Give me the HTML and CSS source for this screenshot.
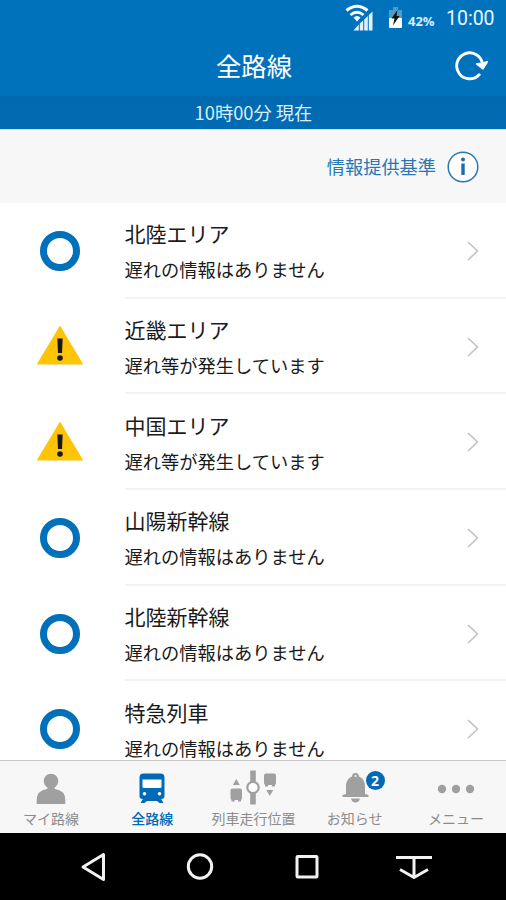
FILE: index.html
```html
<!DOCTYPE html>
<html lang="ja">
<head>
<meta charset="utf-8">
<title>全路線</title>
<link rel="stylesheet" href="styles.css">
</head>
<body>
<div class="screen">
  <header class="header">
    <div class="status">
      <svg class="signal" width="30" height="28" viewBox="0 0 30 28">
        <path d="M1.500 6.500Q12 -2 22.500 6.500" fill="none" stroke="#fff" stroke-width="3"/>
        <path d="M5.500 11Q12 5.500 18.500 11" fill="none" stroke="#fff" stroke-width="2.800"/>
        <path d="M8.500 13.500Q12 10.500 15.500 13.500L12 17.500z" fill="#fff"/>
        <path d="M27.500 7.500V26.500H23.800V11zM22.800 12V26.500H19.200V15.500zM18.200 16.500V26.500H14.800V19.500zM13.800 20.500V26.500H8.500z" fill="#e4f1fc"/>
      </svg>
      <svg class="battery" width="15" height="22" viewBox="0 0 15 22">
        <path d="M5 0H10V3H14V11H1V3H5z" fill="#4b9bcc"/>
        <path d="M1 11H14V20Q14 21 13 21H2Q1 21 1 20z" fill="#fff"/>
        <path d="M9.500 3L3.500 11.500H6.500L5 18.500L11.500 9H8.500z" fill="#111"/>
      </svg>
      <span class="percent">42%</span>
      <span class="clock">10:00</span>
    </div>
    <div class="titlebar">
      <h1>全路線</h1>
      <svg class="refresh" width="36" height="34" viewBox="0 0 36 34">
        <path d="M25.200 25.700A13 13 0 1 1 28.500 14.500" fill="none" stroke="#fff" stroke-width="2.900" stroke-linecap="round"/>
        <path d="M23 15L28.800 19.500L33 13L28.500 14.500z" fill="#fff" stroke="#fff" stroke-width="2.200" stroke-linecap="round" stroke-linejoin="round"/>
      </svg>
    </div>
    <div class="asof">10時00分 現在</div>
  </header>

  <div class="criteria">
    <span>情報提供基準</span>
    <svg width="32" height="32" viewBox="0 0 32 32">
      <circle cx="16" cy="16" r="14.800" fill="#fff" stroke="#2878b4" stroke-width="1.500"/>
      <circle cx="16" cy="8.500" r="2" fill="#1c6baa"/>
      <path d="M16 12.500V24" stroke="#1c6baa" stroke-width="3.400"/>
    </svg>
  </div>

  <main class="list">
    <div class="row">
      <div class="mark"><i class="ring"></i></div>
      <div class="body"><div class="text"><h2>北陸エリア</h2><p>遅れの情報はありません</p></div>
      <svg class="chevron" viewBox="0 0 12 20"><path d="M1 1L10.500 10L1 19"/></svg></div>
    </div>
    <div class="row">
      <div class="mark"><svg class="warn" width="48" height="40" viewBox="0 0 48 40"><path d="M24 .5L47.300 39.500H.7z" fill="#fdc408"/><path d="M21.300 13.500H26.700L26 28H22z" fill="#15191e"/><circle cx="24" cy="33" r="2.800" fill="#15191e"/></svg></div>
      <div class="body"><div class="text"><h2>近畿エリア</h2><p>遅れ等が発生しています</p></div>
      <svg class="chevron" viewBox="0 0 12 20"><path d="M1 1L10.500 10L1 19"/></svg></div>
    </div>
    <div class="row">
      <div class="mark"><svg class="warn" width="48" height="40" viewBox="0 0 48 40"><path d="M24 .5L47.300 39.500H.7z" fill="#fdc408"/><path d="M21.300 13.500H26.700L26 28H22z" fill="#15191e"/><circle cx="24" cy="33" r="2.800" fill="#15191e"/></svg></div>
      <div class="body"><div class="text"><h2>中国エリア</h2><p>遅れ等が発生しています</p></div>
      <svg class="chevron" viewBox="0 0 12 20"><path d="M1 1L10.500 10L1 19"/></svg></div>
    </div>
    <div class="row">
      <div class="mark"><i class="ring"></i></div>
      <div class="body"><div class="text"><h2>山陽新幹線</h2><p>遅れの情報はありません</p></div>
      <svg class="chevron" viewBox="0 0 12 20"><path d="M1 1L10.500 10L1 19"/></svg></div>
    </div>
    <div class="row">
      <div class="mark"><i class="ring"></i></div>
      <div class="body"><div class="text"><h2>北陸新幹線</h2><p>遅れの情報はありません</p></div>
      <svg class="chevron" viewBox="0 0 12 20"><path d="M1 1L10.500 10L1 19"/></svg></div>
    </div>
    <div class="row">
      <div class="mark"><i class="ring"></i></div>
      <div class="body"><div class="text"><h2>特急列車</h2><p>遅れの情報はありません</p></div>
      <svg class="chevron" viewBox="0 0 12 20"><path d="M1 1L10.500 10L1 19"/></svg></div>
    </div>
  </main>

  <nav class="tabs">
    <div class="tab">
      <svg width="48" height="38" viewBox="0 0 48 38" fill="#a0a0a0"><circle cx="24" cy="11" r="7.300"/><path d="M9.700 34V30Q9.700 20.500 20 19L21 16H27L28 19Q38.300 20.500 38.300 30V34z"/></svg>
      <span>マイ路線</span>
    </div>
    <div class="tab active">
      <svg width="48" height="38" viewBox="0 0 48 38" fill="#0069b8"><path d="M15.500 3.500H32.500Q36.500 3.500 36.500 7.500V26Q36.500 29 33.500 29H14.500Q11.500 29 11.500 26V7.500Q11.500 3.500 15.500 3.500z"/><path d="M15.500 28L12.500 33H16.500L19 31H29L31.500 33H35.500L32.500 28z"/><path d="M14.500 9.500H33.500V16.500Q33.500 18 32 18H16Q14.500 18 14.500 16.500z" fill="#fff"/><circle cx="16.500" cy="23.700" r="1.800" fill="#fff"/><circle cx="31.500" cy="23.700" r="1.800" fill="#fff"/></svg>
      <span>全路線</span>
    </div>
    <div class="tab">
      <svg width="48" height="38" viewBox="0 0 48 38" fill="#a0a0a0"><path d="M21.200 .5H26.800V34.500H21.200z"/><circle cx="24" cy="17.500" r="5.700" fill="#fff" stroke="#a0a0a0" stroke-width="2.200"/><path d="M7.300 9L10.800 15H3.800zM40.800 26L44.300 20H37.300z"/><rect x="1.500" y="18.500" width="11.500" height="11.500" rx="2"/><path d="M2.500 29H5.500V31.500H2.500zM9 29H12V31.500H9z"/><rect x="35" y="3.500" width="12" height="11.500" rx="2"/><path d="M36 14H39V16.500H36zM43 14H46V16.500H43z"/></svg>
      <span>列車走行位置</span>
    </div>
    <div class="tab">
      <svg width="48" height="38" viewBox="0 0 48 38" fill="#a0a0a0"><path d="M24.500 3Q28 3 28 6.500Q34 9 34 16V24L37.500 25V27H11.500V25L15 24V16Q15 9 21 6.500Q21 3 24.500 3z"/><circle cx="24.500" cy="6" r="1" fill="#f7f7f7"/><path d="M20 28.500H29Q28 32.500 24.500 32.500T20 28.500z"/></svg>
      <b class="badge">2</b>
      <span>お知らせ</span>
    </div>
    <div class="tab">
      <svg width="48" height="38" viewBox="0 0 48 38" fill="#a0a0a0"><circle cx="10" cy="19" r="4.200"/><circle cx="24" cy="19" r="4.200"/><circle cx="38" cy="19" r="4.200"/></svg>
      <span>メニュー</span>
    </div>
  </nav>

  <footer class="sysnav">
    <svg viewBox="0 0 40 32"><path d="M30.500 3.500V28.500L10 16z"/></svg>
    <svg viewBox="0 0 40 32"><circle cx="20" cy="15.500" r="11.700"/></svg>
    <svg viewBox="0 0 40 32"><rect x="10" y="5.500" width="20" height="20.500" rx=".8"/></svg>
    <svg viewBox="0 0 40 32"><path d="M2 6.500H38M20 6.500V26M6 18.500L20 26.500L34 18.500"/></svg>
  </footer>
</div>
</body>
</html>
```

FILE: styles.css
```css
* { box-sizing: border-box; }
body {
  margin: 0;
  font-family: "Noto Sans CJK JP", sans-serif;
  color: #1a1a1a;
}
h1, h2, p { margin: 0; font-weight: 400; }
svg { display: block; flex: none; }
.screen {
  width: 506px;
  height: 900px;
  display: flex;
  flex-direction: column;
  overflow: hidden;
  background: #fff;
}
.header { flex: none; height: 130px; background: #0072bc; color: #fff; border-bottom: 1px solid #cfe0f2; }
.status {
  height: 36px;
  display: flex;
  align-items: flex-start;
  justify-content: flex-end;
  padding: 4px 10px 0 0;
  font-family: Roboto, sans-serif;
}
.signal { margin-right: 13px; }
.battery { margin: 3px 5px 0 0; }
.percent { width: 30px; font: 700 13px/16px "Open Sans", sans-serif; padding-top: 9px; margin-right: 8px; color: #d6edff; }
.clock { width: 50px; font-size: 19.500px; line-height: 24px; padding-top: 3px; color: #e9f5ff; white-space: nowrap; }
.titlebar {
  height: 60px;
  display: grid;
  grid-template-columns: 1fr auto 1fr;
  align-items: center;
  padding: 0 16px 2px;
}
.titlebar h1 { grid-column: 2; font-size: 25.300px; line-height: 36px; font-weight: 400; padding-left: 2px; }
.refresh { justify-self: end; margin-top: 2px; }
.asof {
  height: 33px;
  background: linear-gradient(#0069af, #006cb4);
  text-align: center;
  font-size: 18.300px;
  line-height: 33px;
  padding-left: 1px;
  color: #dceeff;
}
.criteria {
  flex: none;
  height: 73px;
  display: flex;
  align-items: center;
  justify-content: flex-end;
  gap: 11px;
  padding-right: 27px;
  background: #f7f7f7;
  color: #2877b5;
  font-size: 18.200px;
}
.criteria span { padding-bottom: 2px; }
.list { flex: 1; min-height: 0; overflow: hidden; }
.row { display: flex; height: 95.700px; }
.mark { width: 119px; margin-right: 5.500px; display: flex; align-items: center; justify-content: center; flex: none; }
.ring { width: 40px; height: 40px; border: 7px solid #0070bb; border-radius: 50%; }
.warn { margin-bottom: 3px; }
.body {
  flex: 1;
  display: flex;
  align-items: center;
  justify-content: space-between;
  border-bottom: 2px solid #f3f3f3;
  padding-right: 27px;
}
.text { padding-top: 4px; }
.text h2 { font-size: 21px; line-height: 36px; }
.text p { font-size: 18.250px; line-height: 37px; }
.chevron { width: 12px; height: 20px; margin-top: 2px; fill: none; stroke: #c4c4c4; stroke-width: 1.700; }
.tabs {
  flex: none;
  height: 73px;
  display: grid;
  grid-template-columns: repeat(5, 1fr);
  background: #f7f7f7;
  border-top: 1px solid #c8c8c8;
}
.tab {
  position: relative;
  display: flex;
  flex-direction: column;
  align-items: center;
  padding: 9px 0 0 1px;
  font-size: 14px;
  line-height: 20px;
  color: #8c8c8c;
  white-space: nowrap;
}
.tab.active { color: #0069b8; }
.tab.active span { font-weight: 500; }
.badge {
  position: absolute;
  top: 10px;
  left: 62px;
  width: 19px;
  height: 19px;
  border-radius: 50%;
  background: #0069b8;
  color: #fff;
  text-align: center;
  font: 700 14px/19px "Open Sans", sans-serif;
}
.sysnav {
  flex: none;
  height: 67px;
  background: #000;
  display: grid;
  grid-template-columns: repeat(4, 107px);
  justify-content: center;
  justify-items: center;
  padding: 18px 0 0 1px;
}
.sysnav svg { width: 40px; height: 32px; fill: none; stroke: #f2f2f2; stroke-width: 3; stroke-linejoin: round; stroke-linecap: butt; }
```
